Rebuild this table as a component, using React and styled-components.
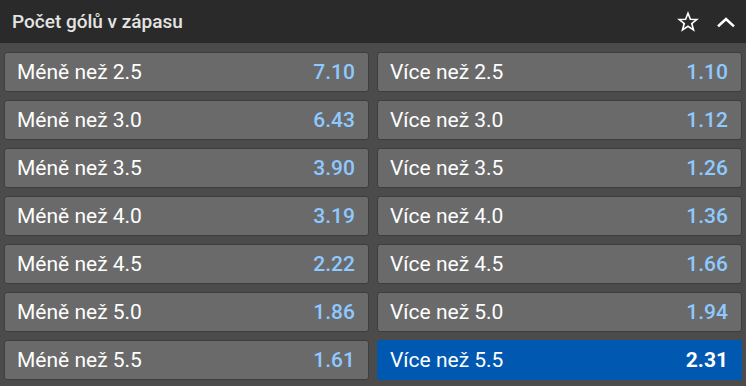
import React from "react";
import styled, { createGlobalStyle } from "styled-components";

const Global = createGlobalStyle`
  html, body { margin: 0; padding: 0; background: #4b4b4b; }
  body { font-family: Roboto, "Noto Sans", Arial, sans-serif; -webkit-font-smoothing: antialiased; }
`;

const Panel = styled.div`
  width: 746px;
  height: 386px;
  background: #4b4b4b;
  display: flex;
  flex-direction: column;
`;

const Header = styled.div`
  height: 43px;
  background: #2a2a2a;
  display: flex;
  align-items: center;
  padding: 0 7px 0 12px;
  box-sizing: border-box;
`;

const Title = styled.div`
  flex: 1;
  color: #e4e4e4;
  font-size: 19px;
  font-weight: 500;
  letter-spacing: 0;
`;

const IconBtn = styled.div`
  display: flex;
  align-items: center;
  justify-content: center;
  width: 26px;
  height: 26px;
  margin-left: ${(p) => p.$gap || 0}px;
`;

const Grid = styled.div`
  display: grid;
  grid-template-columns: 1fr 1fr;
  grid-auto-rows: 40px;
  gap: 8px;
  padding: 9px 4px 6px 4px;
`;

const Odd = styled.div`
  display: flex;
  align-items: center;
  justify-content: space-between;
  box-sizing: border-box;
  padding: 0 13px 0 12px;
  border-radius: 3px;
  background: ${(p) => (p.$selected ? "#0058b0" : "#6a6a6a")};
  border: 1px solid ${(p) => (p.$selected ? "#0058b0" : "#3e3e3e")};
  color: #ffffff;
  font-size: 21px;
`;

const Label = styled.span`
  font-weight: 400;
`;

const Value = styled.span`
  font-weight: ${(p) => (p.$selected ? 700 : 500)};
  color: ${(p) => (p.$selected ? "#ffffff" : "#8ec9ff")};
`;

const rows = [
  ["2.5", "7.10", "1.10"],
  ["3.0", "6.43", "1.12"],
  ["3.5", "3.90", "1.26"],
  ["4.0", "3.19", "1.36"],
  ["4.5", "2.22", "1.66"],
  ["5.0", "1.86", "1.94"],
  ["5.5", "1.61", "2.31"],
];

const Star = () => (
  <svg width="22" height="22" viewBox="0 0 24 24" fill="none" stroke="#ffffff" strokeWidth="1.8" strokeLinejoin="miter">
    <polygon points="12,2.5 14.6,9 21.5,9.3 16.1,13.7 18,20.6 12,16.7 6,20.6 7.9,13.7 2.5,9.3 9.4,9" />
  </svg>
);

const Chevron = () => (
  <svg width="20" height="12" viewBox="0 0 20 12" fill="none" stroke="#ffffff" strokeWidth="2.6" strokeLinecap="square">
    <polyline points="3,9.5 10,3 17,9.5" />
  </svg>
);

export default function App() {
  return (
    <Panel>
      <Global />
      <Header>
        <Title>Počet gólů v zápasu</Title>
        <IconBtn><Star /></IconBtn>
        <IconBtn $gap={12}><Chevron /></IconBtn>
      </Header>
      <Grid>
        {rows.map(([line, under, over], i) => (
          <React.Fragment key={line}>
            <Odd>
              <Label>Méně než {line}</Label>
              <Value>{under}</Value>
            </Odd>
            <Odd $selected={i === rows.length - 1}>
              <Label>Více než {line}</Label>
              <Value $selected={i === rows.length - 1}>{over}</Value>
            </Odd>
          </React.Fragment>
        ))}
      </Grid>
    </Panel>
  );
}
